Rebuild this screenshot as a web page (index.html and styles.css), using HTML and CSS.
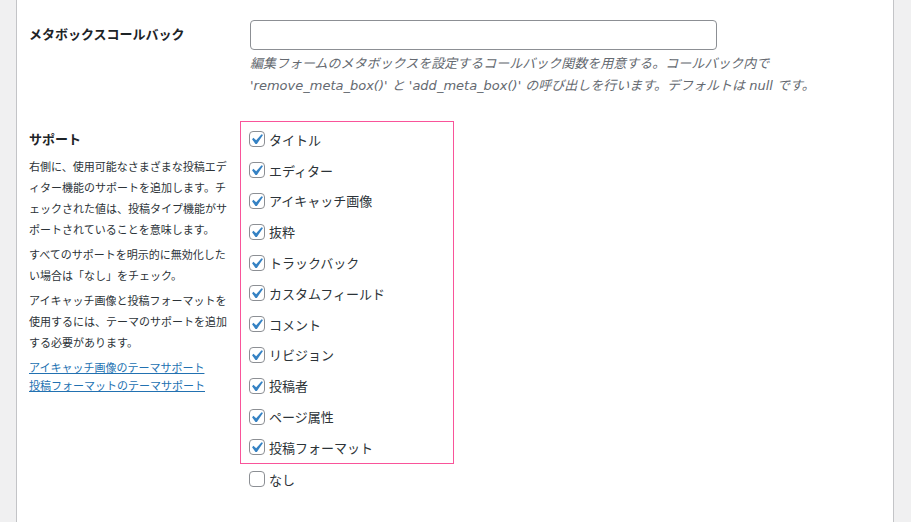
FILE: index.html
```html
<!DOCTYPE html>
<html lang="ja">
<head>
    <meta charset="UTF-8">
    <title>投稿タイプの編集</title>
    <link rel="stylesheet" href="styles.css">
</head>
<body>
    <div class="panel">
        <div class="row row-callback">
            <div class="row-head">
                <label class="field-label" for="metabox">メタボックスコールバック</label>
            </div>
            <div class="row-body">
                <input type="text" id="metabox" class="text-input">
                <p class="description">編集フォームのメタボックスを設定するコールバック関数を用意する。コールバック内で<br>'remove_meta_box()' と 'add_meta_box()' の呼び出しを行います。デフォルトは null です。</p>
            </div>
        </div>

        <div class="row row-supports">
            <div class="row-head">
                <h3 class="field-label">サポート</h3>
                <p class="help">右側に、使用可能なさまざまな投稿エディター機能のサポートを追加します。チェックされた値は、投稿タイプ機能がサポートされていることを意味します。</p>
                <p class="help">すべてのサポートを明示的に無効化したい場合は「なし」をチェック。</p>
                <p class="help">アイキャッチ画像と投稿フォーマットを使用するには、テーマのサポートを追加する必要があります。</p>
                <p class="help-links">
                    <a href="#">アイキャッチ画像のテーマサポート</a><br>
                    <a href="#">投稿フォーマットのテーマサポート</a>
                </p>
            </div>
            <div class="row-body">
                <div class="support-box">
                    <label class="check-row"><span class="checkbox checked"><svg viewBox="0 0 20 20"><path d="M14.83 4.89l1.34.94-5.81 8.38H9.02L5.78 9.67l1.34-1.25 2.57 2.4z"/></svg></span>タイトル</label>
                    <label class="check-row"><span class="checkbox checked"><svg viewBox="0 0 20 20"><path d="M14.83 4.89l1.34.94-5.81 8.38H9.02L5.78 9.67l1.34-1.25 2.57 2.4z"/></svg></span>エディター</label>
                    <label class="check-row"><span class="checkbox checked"><svg viewBox="0 0 20 20"><path d="M14.83 4.89l1.34.94-5.81 8.38H9.02L5.78 9.67l1.34-1.25 2.57 2.4z"/></svg></span>アイキャッチ画像</label>
                    <label class="check-row"><span class="checkbox checked"><svg viewBox="0 0 20 20"><path d="M14.83 4.89l1.34.94-5.81 8.38H9.02L5.78 9.67l1.34-1.25 2.57 2.4z"/></svg></span>抜粋</label>
                    <label class="check-row"><span class="checkbox checked"><svg viewBox="0 0 20 20"><path d="M14.83 4.89l1.34.94-5.81 8.38H9.02L5.78 9.67l1.34-1.25 2.57 2.4z"/></svg></span>トラックバック</label>
                    <label class="check-row"><span class="checkbox checked"><svg viewBox="0 0 20 20"><path d="M14.83 4.89l1.34.94-5.81 8.38H9.02L5.78 9.67l1.34-1.25 2.57 2.4z"/></svg></span>カスタムフィールド</label>
                    <label class="check-row"><span class="checkbox checked"><svg viewBox="0 0 20 20"><path d="M14.83 4.89l1.34.94-5.81 8.38H9.02L5.78 9.67l1.34-1.25 2.57 2.4z"/></svg></span>コメント</label>
                    <label class="check-row"><span class="checkbox checked"><svg viewBox="0 0 20 20"><path d="M14.83 4.89l1.34.94-5.81 8.38H9.02L5.78 9.67l1.34-1.25 2.57 2.4z"/></svg></span>リビジョン</label>
                    <label class="check-row"><span class="checkbox checked"><svg viewBox="0 0 20 20"><path d="M14.83 4.89l1.34.94-5.81 8.38H9.02L5.78 9.67l1.34-1.25 2.57 2.4z"/></svg></span>投稿者</label>
                    <label class="check-row"><span class="checkbox checked"><svg viewBox="0 0 20 20"><path d="M14.83 4.89l1.34.94-5.81 8.38H9.02L5.78 9.67l1.34-1.25 2.57 2.4z"/></svg></span>ページ属性</label>
                    <label class="check-row"><span class="checkbox checked"><svg viewBox="0 0 20 20"><path d="M14.83 4.89l1.34.94-5.81 8.38H9.02L5.78 9.67l1.34-1.25 2.57 2.4z"/></svg></span>投稿フォーマット</label>
                </div>
                <div class="support-none">
                    <label class="check-row"><span class="checkbox"></span>なし</label>
                </div>
            </div>
        </div>
    </div>
</body>
</html>
```

FILE: styles.css
```css
* {
    box-sizing: border-box;
}

body {
    margin: 0;
    background-color: #f0f0f1;
    color: #1d2327;
    font-family: "Liberation Sans", "Noto Sans CJK JP", sans-serif;
    overflow: hidden;
}

.panel {
    margin: 0 17px 0 16px;
    min-height: 522px;
    background-color: #fff;
    border-left: 1px solid #c3c4c7;
    border-right: 1px solid #c3c4c7;
}

.row {
    display: grid;
    grid-template-columns: 223px 1fr;
}

.row-head {
    padding-left: 12px;
}

.field-label {
    display: block;
    margin: 0;
    font-size: 13px;
    font-weight: bold;
    color: #1d2327;
}

/* メタボックス */
.row-callback {
    padding-top: 20px;
}

.row-callback .field-label {
    line-height: 29px;
}

.text-input {
    display: block;
    margin-left: 10px;
    width: 467px;
    height: 30px;
    border: 1px solid #8c8f94;
    border-radius: 4px;
    background: #fff;
}

.description {
    margin: 3px 0 0 10px;
    font-family: "DejaVu Sans", "Noto Sans CJK JP", sans-serif;
    font-size: 13px;
    line-height: 22px;
    font-style: italic;
    color: #646970;
}

/* サポート */
.row-supports {
    margin-top: 24px;
}

.row-supports .row-head {
    padding-top: 9px;
}

.row-supports .field-label {
    line-height: 20px;
}

.help {
    margin: 7px 0 0;
    font-size: 11px;
    line-height: 21px;
    color: #2c3338;
    width: 202px;
}

.help + .help {
    margin-top: 4px;
}

.help-links {
    margin: 5px 0 0;
    font-size: 11px;
    line-height: 18px;
}

.help-links a {
    color: #2271b1;
}

.support-box {
    width: 214px;
    padding: 2px 0 0 8px;
    border: 1px solid #f9549a;
}

.support-none {
    padding-left: 9px;
}

.check-row {
    display: flex;
    align-items: center;
    gap: 4px;
    height: 30.8px;
    font-size: 13px;
    color: #2c3338;
}

.checkbox {
    display: block;
    width: 16px;
    height: 16px;
    border: 1px solid #8c8f94;
    border-radius: 4px;
    background: #fff;
    flex-shrink: 0;
}

.checkbox svg {
    display: block;
    width: 21px;
    height: 21px;
    margin: -3px 0 0 -4px;
    fill: #3582c4;
}
```
